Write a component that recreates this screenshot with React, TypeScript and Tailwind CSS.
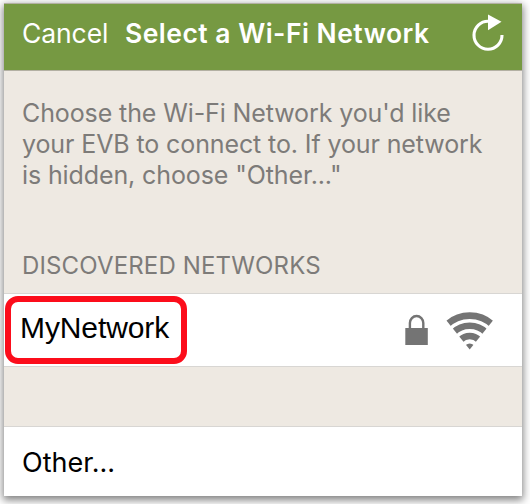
function RefreshIcon() {
  return (
    <svg className="mt-[9px] h-[40px] w-[34px] shrink-0" viewBox="471 13 34 40" fill="none">
      <path d="M488.5 21.2A14 14 0 1 0 502 35" stroke="white" strokeWidth="3.1" />
      <path d="M488 14.5L501.5 21.7L488 30.3Z" fill="white" />
    </svg>
  );
}

function LockIcon() {
  return (
    <svg className="h-[32px] w-[24px]" viewBox="404 314 24 32" fill="none">
      <path d="M409.9 329V323a6.7 7 0 0 1 13.4 0V329" stroke="#747474" strokeWidth="2.4" />
      <path d="M405.3 328H427.8V345H405.3Z" fill="#747474" />
    </svg>
  );
}

function WifiIcon() {
  return (
    <svg className="ml-[18px] h-[40px] w-[48px]" viewBox="446 310 48 40" fill="none">
      <clipPath id="wifi-wedge">
        <path d="M469.7 349.5L442 315V300H497.4V315Z" />
      </clipPath>
      <g clipPath="url(#wifi-wedge)" stroke="#747474" strokeWidth="6.6">
        <circle cx="469.7" cy="349" r="33.4" />
        <circle cx="469.7" cy="349" r="23.2" />
        <circle cx="469.7" cy="349" r="13" />
        <circle cx="469.7" cy="349" r="5.6" fill="#747474" stroke="none" />
      </g>
    </svg>
  );
}

export default function App() {
  return (
    <main className="h-[504px] w-[530px] overflow-hidden bg-white pl-1 pt-[3px] font-['Inter','Liberation_Sans',sans-serif] whitespace-nowrap">
      <div className="flex h-[493px] w-[518px] flex-col bg-[#eee9e2] shadow-[0_3px_8px_1px_rgba(0,0,0,0.5)]">
        <header className="flex h-[68px] shrink-0 border-y border-[#b3b0a3] bg-[#769942] pl-[18px] text-white">
          <button className="h-[58px] w-[103px] text-left text-[26.5px] leading-[58px] tracking-[-0.1px]">Cancel</button>
          <h1 className="h-[58px] w-[346px] text-[26.5px] font-semibold leading-[58px] tracking-[0.48px]">Select a Wi-Fi Network</h1>
          <RefreshIcon />
        </header>
        <section className="h-[222px] shrink-0 pl-[18px] pt-[27px] text-[25px] leading-[31px] tracking-[-0.11px] text-[#7d7b79]">
          <p>Choose the Wi-Fi Network you'd like</p>
          <p>your EVB to connect to. If your network</p>
          <p>is hidden, choose "Other..."</p>
          <h2 className="mt-[59px] text-[24px] tracking-[0.15px]">DISCOVERED NETWORKS</h2>
        </section>
        <div className="flex h-[73px] shrink-0 items-center border-t border-[#d8d6d3] bg-white">
          <div className="ml-[1px] h-[68px] w-[182px] shrink-0 rounded-[13px] border-[6px] border-[#fc0d1b] pl-[9px] font-['Liberation_Sans',Arial,sans-serif] text-[30px] leading-[51px] tracking-[-0.1px] text-black">
            MyNetwork
          </div>
          <div className="ml-[217px] flex items-center">
            <LockIcon />
            <WifiIcon />
          </div>
        </div>
        <div className="h-[61px] shrink-0 border-y border-[#d8d6d3]" />
        <div className="h-[69px] shrink-0 bg-white pl-[18px] text-[27px] leading-[71px] text-black">Other...</div>
      </div>
    </main>
  );
}
